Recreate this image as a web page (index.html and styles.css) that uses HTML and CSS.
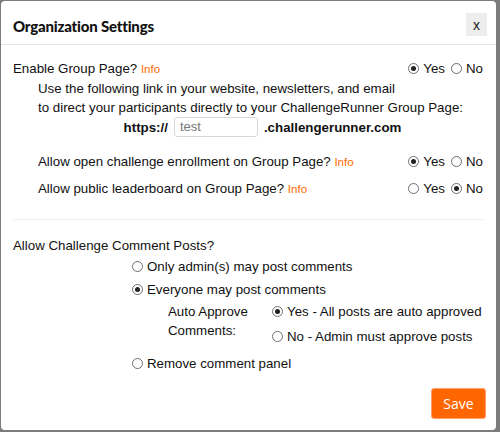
FILE: index.html
```html
<!DOCTYPE html>
<html>
<head>
<meta charset="utf-8">
<link rel="stylesheet" href="styles.css">
</head>
<body>
<div class="dialog">
  <div class="header">
    <h1 class="title">Organization Settings</h1>
    <button class="close">x</button>
  </div>
  <div class="body">
    <div class="row">
      <span class="label">Enable Group Page? <span class="info">Info</span></span>
      <span class="choices">
        <span class="opt"><span class="radio on"></span>Yes</span>
        <span class="opt"><span class="radio"></span>No</span>
      </span>
    </div>
    <div class="indent">
      <p class="desc">Use the following link in your website, newsletters, and email<br>to direct your participants directly to your ChallengeRunner Group Page:</p>
      <div class="link-row">
        <b>https://</b>
        <span class="field">test</span>
        <b>.challengerunner.com</b>
      </div>
      <div class="row sub first">
        <span class="label">Allow open challenge enrollment on Group Page? <span class="info">Info</span></span>
        <span class="choices">
          <span class="opt"><span class="radio on"></span>Yes</span>
          <span class="opt"><span class="radio"></span>No</span>
        </span>
      </div>
      <div class="row sub">
        <span class="label">Allow public leaderboard on Group Page? <span class="info">Info</span></span>
        <span class="choices">
          <span class="opt"><span class="radio"></span>Yes</span>
          <span class="opt"><span class="radio on"></span>No</span>
        </span>
      </div>
    </div>
    <hr class="sep">
    <div class="q">Allow Challenge Comment Posts?</div>
    <div class="options">
      <div class="opt line"><span class="radio"></span>Only admin(s) may post comments</div>
      <div class="opt line second"><span class="radio on"></span>Everyone may post comments</div>
      <div class="approve">
        <div class="approve-label">Auto Approve Comments:</div>
        <div class="approve-opts">
          <div class="opt"><span class="radio on"></span>Yes - All posts are auto approved</div>
          <div class="opt"><span class="radio"></span>No - Admin must approve posts</div>
        </div>
      </div>
      <div class="opt line remove"><span class="radio"></span>Remove comment panel</div>
    </div>
    <div class="footer">
      <button class="save">Save</button>
    </div>
  </div>
</div>
</body>
</html>
```
FILE: styles.css
```css
html, body {
  margin: 0;
  padding: 0;
}
body {
  background: #7c7c7c;
  width: 500px;
  height: 432px;
  font-family: "Liberation Sans", Arial, sans-serif;
  font-size: 13.3px;
  color: #111;
}
.dialog {
  margin: 1px 0 0 1px;
  width: 495px;
  height: 429px;
  background: #fff;
  border-radius: 4px;
  box-sizing: border-box;
  display: flex;
  flex-direction: column;
  overflow: hidden;
}
.header {
  flex: none;
  height: 43px;
  box-sizing: content-box;
  border-bottom: 1px solid #e6e6e6;
  display: flex;
  align-items: flex-start;
  justify-content: space-between;
  padding: 0 9px 0 12px;
}
.title {
  margin: 14px 0 0 0;
  line-height: 22px;
  font-family: "Lato", sans-serif;
  font-weight: 900;
  font-size: 15px;
  color: #111;
  letter-spacing: -0.2px;
}
.close {
  width: 21px;
  height: 23px;
  border: none;
  background: #ededed;
  font-family: "Liberation Sans", Arial, sans-serif;
  font-size: 14px;
  color: #222;
  padding: 0;
  margin-top: 12px;
}
.body {
  padding: 14px 12px 0 12px;
  flex: 1;
  display: flex;
  flex-direction: column;
}
.row {
  display: flex;
  justify-content: space-between;
  align-items: center;
  height: 19px;
}
.info {
  color: #ff6a00;
  font-size: 11.5px;
}
.choices {
  display: flex;
  gap: 6px;
  padding-right: 1px;
}
.opt {
  display: flex;
  align-items: center;
}
.radio {
  width: 11px;
  height: 11px;
  box-sizing: border-box;
  border: 1px solid #6f6f6f;
  border-radius: 50%;
  margin-right: 4px;
  position: relative;
  flex: none;
}
.radio.on::after {
  content: "";
  position: absolute;
  left: 2px;
  top: 2px;
  width: 5px;
  height: 5px;
  border-radius: 50%;
  background: #222;
}
.indent {
  padding-left: 25px;
}
.desc {
  margin: 1px 0 0 0;
  line-height: 19px;
}
.link-row {
  display: flex;
  justify-content: center;
  align-items: center;
  gap: 6px;
  height: 20px;
  margin-top: 0;
  padding-left: 3px;
}
.link-row b {
  font-weight: bold;
}
.field {
  width: 84px;
  height: 20px;
  box-sizing: border-box;
  border: 1px solid #d9d9d9;
  border-radius: 3px;
  color: #777;
  font-size: 13px;
  padding-left: 5px;
  line-height: 18px;
}
.row.sub.first {
  margin-top: 15px;
}
.row.sub {
  margin-top: 8px;
}
.sep {
  border: none;
  border-top: 1px solid #efefef;
  margin: 21px 0 0 0;
  height: 0;
}
.q {
  margin-top: 16px;
  height: 19px;
  line-height: 19px;
}
.options {
  padding-left: 119px;
}
.line {
  height: 19px;
  margin-top: 2px;
}
.line.second {
  margin-top: 4px;
}
.approve {
  display: flex;
  margin-top: 3px;
  padding-left: 36px;
}
.approve-label {
  width: 104px;
  line-height: 19px;
}
.approve-opts {
  display: flex;
  flex-direction: column;
  gap: 6px;
}
.approve-opts .opt {
  height: 19px;
}
.line.remove {
  margin-top: 8px;
}
.footer {
  display: flex;
  justify-content: flex-end;
  margin-top: 15px;
}
.save {
  width: 55px;
  height: 31px;
  background: #ff6600;
  border: 1px solid #ffa070;
  border-radius: 3px;
  color: #fff;
  font-family: "Open Sans", sans-serif;
  font-size: 14px;
  margin-right: -2px;
}
```
